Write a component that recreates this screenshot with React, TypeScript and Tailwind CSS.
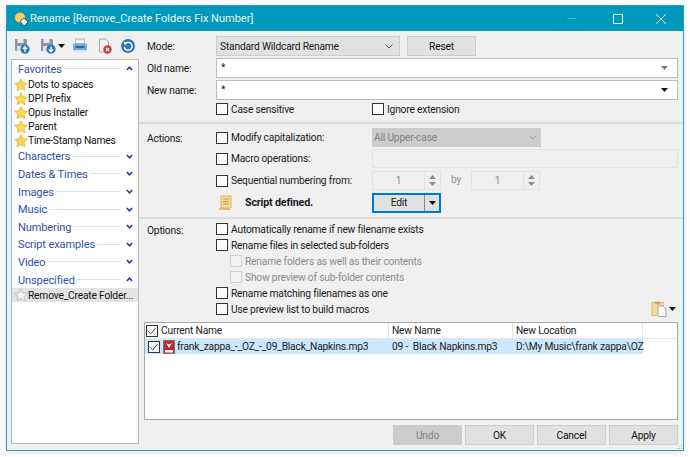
import React from "react";

const font = { fontFamily: 'Roboto, "Noto Sans", sans-serif' };

const Star = ({ grey = false }: { grey?: boolean }) => (
  <svg width="14" height="14" viewBox="0 0 14 14" className="shrink-0">
    <path
      d="M7 .8l1.900 4 4.400.5-3.300 3 .9 4.400L7 10.500l-3.900 2.200.9-4.400-3.300-3 4.400-.5z"
      fill={grey ? "#f4f4f4" : "#fbd84e"}
      stroke={grey ? "#b9b9b9" : "#d8b13a"}
      strokeWidth="0.8"
    />
  </svg>
);

const Chevron = ({ up = false }: { up?: boolean }) => (
  <svg width="7" height="5" viewBox="0 0 7 5" className="shrink-0">
    <path d={up ? "M.8 4L3.500 1.200 6.200 4" : "M.8 1l2.700 2.800L6.200 1"} fill="none" stroke="#1c3f94" strokeWidth="1.500" />
  </svg>
);

const Caret = ({ color = "#111" }: { color?: string }) => (
  <svg width="7" height="4" viewBox="0 0 7 4" className="shrink-0">
    <path d="M0 0h7L3.500 4z" fill={color} />
  </svg>
);

const Floppy = ({ up }: { up: boolean }) => (
  <svg width="16" height="16" viewBox="0 0 16 16" className="shrink-0">
    <path d="M1 1h11l1 1v11H1z" fill="#8d949c" />
    <rect x="3.500" y="1" width="6" height="4" fill="#e8eaec" />
    <rect x="3" y="8" width="7" height="5" fill="#dfe2e5" />
    <circle cx="11" cy="11.200" r="4.600" fill="#2a78b8" />
    <path
      d={up ? "M11 14v-5M8.800 11L11 8.600l2.200 2.400" : "M11 8.500v5M8.800 11.400l2.200 2.300 2.200-2.300"}
      fill="none"
      stroke="#fff"
      strokeWidth="1.300"
    />
  </svg>
);

const Box = ({ checked = false, disabled = false }: { checked?: boolean; disabled?: boolean }) => (
  <div
    className={`w-[12px] h-[12px] shrink-0 border flex items-center justify-center ${
      disabled ? "border-[#cfcfcf] bg-[#f3f3f3]" : "border-[#333] bg-[#fbfbfb]"
    }`}
  >
    {checked && (
      <svg width="10" height="10" viewBox="0 0 10 10">
        <path d="M1.200 5.200l2.600 2.600 5-6" fill="none" stroke="#444" strokeWidth="1" />
      </svg>
    )}
  </div>
);

const Check = ({ label, disabled = false }: { label: string; disabled?: boolean }) => (
  <div className="flex items-center gap-[3px] whitespace-nowrap">
    <Box disabled={disabled} />
    <span className={`pt-[2px] ${disabled ? "text-[#8c8c8c]" : ""}`}>{label}</span>
  </div>
);

const Group = ({ title, open = false }: { title: string; open?: boolean }) => (
  <div className="h-[17.6px] flex items-center pl-[6px] pr-[4px]">
    <span className="text-[#2d50a8] text-[11px] tracking-[-0.1px] pt-[1px]">{title}</span>
    <div className="flex-1 h-px bg-[#d9e3f3] mx-[2px]" />
    <div className="w-[10px] ml-[2px] flex justify-center">
      <Chevron up={open} />
    </div>
  </div>
);

const Item = ({ label, selected = false }: { label: string; selected?: boolean }) => (
  <div className={`h-[14px] flex items-center pl-[2px] ${selected ? "bg-[#e3e3e3]" : ""}`}>
    <Star grey={selected} />
    <span className="whitespace-nowrap text-[#111] pt-[1px]">{label}</span>
  </div>
);

const Spin = () => (
  <div className="w-[69px] h-[19px] border border-[#e3e3e3] bg-[#f0f0f0] flex text-[#8c8c8c]">
    <div className="flex-1 text-center leading-[17px]">1</div>
    <div className="w-[16px] border-l border-[#e3e3e3] flex flex-col items-center justify-around py-[2px]">
      <svg width="7" height="4" viewBox="0 0 7 4"><path d="M0 4h7L3.500 0z" fill="#8c8c8c" /></svg>
      <Caret color="#8c8c8c" />
    </div>
  </div>
);

const Btn = ({ label, disabled = false }: { label: string; disabled?: boolean }) => (
  <div
    className={`w-[69px] h-[20px] pt-[2px] flex items-center justify-center border ${
      disabled ? "bg-[#cccccc] border-[#cccccc] text-[#838383]" : "bg-[#e1e1e1] border-[#cdcdcd] text-[#111]"
    }`}
  >
    {label}
  </div>
);

export default function App() {
  return (
    <div className="w-[690px] h-[457px] bg-white overflow-hidden pl-[6px] pt-[5px] text-[10.25px] tracking-[-0.2px] text-[#1a1a1a] leading-none" style={font}>
      <div className="relative w-[678px] h-[446px] border border-[#2d9fc0] bg-[#f0f0f0] flex flex-col shadow-[0_1px_6px_rgba(0,0,0,0.14)]">
        {/* title bar */}
        <div className="h-[25px] shrink-0 bg-[#0099bc] flex items-center pl-[6px] text-[#e8f6fa]">
          <svg width="16" height="16" viewBox="0 0 16 16" className="shrink-0">
            <circle cx="7" cy="6.500" r="5.500" fill="#f5d25a" stroke="#5a6ea0" strokeWidth="1" />
            <path d="M7 10l4-3 4 4-4 4z" fill="#f4f4f4" stroke="#3d5a9a" strokeWidth="1" />
          </svg>
          <span className="ml-[1px] text-[11px] tracking-normal whitespace-nowrap">Rename [Remove_Create Folders Fix Number]</span>
          <div className="ml-auto w-[9px] h-px bg-[#3fb0cc] mr-[37px]" />
          <div className="w-[10px] h-[10px] border border-[#dff3f8] mr-[33px]" />
          <svg width="10" height="10" viewBox="0 0 10 10" className="mr-[17px]">
            <path d="M.3.3l9.400 9.400M9.700.3L.3 9.700" stroke="#e8f6fa" strokeWidth="1" />
          </svg>
        </div>

        <div className="flex-1 flex min-h-0">
          {/* left column */}
          <div className="w-[132px] shrink-0 flex flex-col pl-[4px] pb-[6px]">
            <div className="h-[28px] shrink-0 flex items-center pl-[3px] pt-[2px]">
              <Floppy up />
              <div className="ml-[10px]"><Floppy up={false} /></div>
              <div className="ml-[2px]"><Caret /></div>
              <svg width="16" height="16" viewBox="0 0 16 16" className="ml-[7px] shrink-0">
                <rect x="3.500" y="1" width="9" height="5" fill="#eef1f4" stroke="#a9b4c0" />
                <rect x="1" y="5.500" width="14" height="7" rx="1" fill="#7fa8cf" />
                <rect x="3.500" y="8" width="9" height="2" fill="#2f6da6" />
                <rect x="3.500" y="12" width="9" height="2.500" fill="#dfe5ea" />
              </svg>
              <svg width="16" height="16" viewBox="0 0 16 16" className="ml-[9px] shrink-0">
                <path d="M2.500 1h6l3 3v10h-9z" fill="#f4f4f4" stroke="#a8a8a8" />
                <circle cx="10.500" cy="11.500" r="4.200" fill="#d9352b" />
                <path d="M8.800 9.800l3.400 3.400M12.200 9.800l-3.400 3.400" stroke="#fff" strokeWidth="1.200" />
              </svg>
              <svg width="16" height="16" viewBox="0 0 16 16" className="ml-[7px] shrink-0">
                <circle cx="8" cy="8" r="7" fill="#2a78b8" />
                <path d="M5 5.800A4 4 0 1 1 4.200 9" fill="none" stroke="#fff" strokeWidth="1.400" />
                <path d="M3.800 3.600l.2 3.200 3-.6z" fill="#fff" />
              </svg>
            </div>
            <div className="flex-1 bg-white border border-[#b9b9b9] overflow-hidden">
              <Group title="Favorites" open />
              <Item label="Dots to spaces" />
              <Item label="DPI Prefix" />
              <Item label="Opus Installer" />
              <Item label="Parent" />
              <Item label="Time-Stamp Names" />
              <Group title="Characters" />
              <Group title="Dates & Times" />
              <Group title="Images" />
              <Group title="Music" />
              <Group title="Numbering" />
              <Group title="Script examples" />
              <Group title="Video" />
              <Group title="Unspecified" open />
              <Item label="Remove_Create Folder..." selected />
            </div>
          </div>

          {/* right column */}
          <div className="flex-1 min-w-0 flex flex-col">
            <div className="pt-[5px] pb-[6px] pl-[8px] pr-[5px] border-b-2 border-[#dcdcdc] flex flex-col gap-[2px]">
              <div className="flex items-center">
                <span className="w-[69px] pt-[2px]">Mode:</span>
                <div className="w-[184px] h-[20px] bg-[#e1e1e1] border border-[#cdcdcd] flex items-center justify-between px-[3px]">
                  <span className="pt-[2px]">Standard Wildcard Rename</span>
                  <svg width="8" height="5" viewBox="0 0 8 5" className="mr-[3px]">
                    <path d="M.5.5L4 4 7.500.5" fill="none" stroke="#555" />
                  </svg>
                </div>
                <div className="ml-[7px]"><Btn label="Reset" /></div>
              </div>
              {[["Old name:", "#777"], ["New name:", "#111"]].map(([label, c]) => (
                <div key={label} className="flex items-center">
                  <span className="w-[69px] pt-[2px]">{label}</span>
                  <div className="flex-1 h-[20px] bg-white border border-[#bdbdbd] flex items-center justify-between pl-[4px] pr-[9px]">
                    <span>*</span>
                    <Caret color={c} />
                  </div>
                </div>
              ))}
              <div className="h-[14px] flex items-center pl-[69px]">
                <div className="w-[156px]"><Check label="Case sensitive" /></div>
                <Check label="Ignore extension" />
              </div>
            </div>

            <div className="pt-[4px] pb-[5px] pl-[8px] pr-[5px] border-b-2 border-[#dcdcdc] flex">
              <span className="w-[69px] pt-[6px]">Actions:</span>
              <div className="flex-1 flex flex-col gap-[3px]">
                <div className="flex items-center h-[19px]">
                  <div className="w-[156px]"><Check label="Modify capitalization:" /></div>
                  <div className="w-[169px] h-[19px] bg-[#cccccc] text-[#838383] flex items-center justify-between px-[2px]">
                    <span className="pt-[2px]">All Upper-case</span>
                    <svg width="8" height="5" viewBox="0 0 8 5" className="mr-[2px]">
                      <path d="M.5.5L4 4 7.500.5" fill="none" stroke="#9a9a9a" />
                    </svg>
                  </div>
                </div>
                <div className="flex items-center h-[19px] -mt-[1px]">
                  <div className="w-[156px]"><Check label="Macro operations:" /></div>
                  <div className="flex-1 h-[19px] bg-[#f0f0f0] border border-[#e3e3e3]" />
                </div>
                <div className="flex items-center h-[19px]">
                  <div className="w-[156px]"><Check label="Sequential numbering from:" /></div>
                  <Spin />
                  <span className="w-[30px] text-center text-[#8c8c8c]">by</span>
                  <Spin />
                </div>
                <div className="flex items-center h-[19px]">
                  <svg width="16" height="16" viewBox="0 0 16 16" className="ml-[2px] shrink-0">
                    <path d="M3 1h10v12H3z" fill="#f6dc94" stroke="#d9b258" />
                    <path d="M1 13h11v2H1z" fill="#e3bd68" />
                    <path d="M5 4h6M5 6.500h6M5 9h6" stroke="#c49a42" />
                  </svg>
                  <span className="w-[138px] pl-[11px] pt-[2px] font-bold text-[10.75px] shrink-0 whitespace-nowrap">Script defined.</span>
                  <div className="w-[69px] h-[20px] border-2 border-[#0078d7] bg-[#e1e1e1] flex items-center">
                    <span className="flex-1 text-center pt-[2px]">Edit</span>
                    <div className="w-[15px] h-full border-l border-[#8a8a8a] flex items-center justify-center"><Caret /></div>
                  </div>
                </div>
              </div>
            </div>

            <div className="pt-[2px] pl-[8px] pr-[5px] flex">
              <span className="w-[69px] pt-[5px]">Options:</span>
              <div className="flex-1 flex flex-col">
                <div className="h-[16px] flex items-center"><Check label="Automatically rename if new filename exists" /></div>
                <div className="h-[16px] flex items-center"><Check label="Rename files in selected sub-folders" /></div>
                <div className="h-[16px] flex items-center pl-[14px]"><Check disabled label="Rename folders as well as their contents" /></div>
                <div className="h-[16px] flex items-center pl-[14px]"><Check disabled label="Show preview of sub-folder contents" /></div>
                <div className="h-[16px] flex items-center"><Check label="Rename matching filenames as one" /></div>
                <div className="h-[16px] flex items-center justify-between">
                  <Check label="Use preview list to build macros" />
                  <div className="flex items-center gap-[2px] pr-[2px]">
                    <svg width="16" height="16" viewBox="0 0 16 16">
                      <rect x="1" y="1.500" width="11" height="13" fill="#f5dc9a" stroke="#d9bb6e" />
                      <rect x="4" y="0.500" width="5" height="3" fill="#c9a557" />
                      <path d="M7 5h5l3 3v7.500H7z" fill="#fff" stroke="#aaa" />
                    </svg>
                    <Caret />
                  </div>
                </div>
              </div>
            </div>

            {/* preview list */}
            <div className="mt-[5px] mx-[5px] h-[98px] bg-white border border-[#a8a8a8]">
              <div className="h-[16px] grid grid-cols-[244px_124px_130px] border-b border-[#e5e5e5]">
                <div className="flex items-center gap-[3px] pl-[1px] border-r border-[#e5e5e5]">
                  <Box checked />
                  <span className="pt-[2px]">Current Name</span>
                </div>
                <div className="flex items-center pl-[3px] pt-[2px] border-r border-[#e5e5e5]">New Name</div>
                <div className="flex items-center pl-[3px] pt-[2px] border-r border-[#e5e5e5]">New Location</div>
              </div>
              <div className="h-[15px] w-[498px] grid grid-cols-[244px_124px_130px] bg-[#cce8ff]">
                <div className="flex items-center pl-[3px]">
                  <Box checked />
                  <svg width="12" height="14" viewBox="0 0 12 14" className="ml-[3px] shrink-0">
                    <rect x="0.500" y="0.500" width="11" height="13" fill="#c9262c" stroke="#777" />
                    <path d="M3 3l3 5 3-5-3 1.500z" fill="#fff" />
                    <rect x="2" y="10" width="8" height="2.500" fill="#f2f2f2" />
                  </svg>
                  <span className="ml-[2px] pt-[2px] whitespace-nowrap">frank_zappa_-_OZ_-_09_Black_Napkins.mp3</span>
                </div>
                <div className="flex items-center pl-[3px] pt-[2px] whitespace-pre">09 -  Black Napkins.mp3</div>
                <div className="flex items-center pl-[3px] pt-[2px] whitespace-nowrap">D:\My Music\frank zappa\OZ</div>
              </div>
            </div>

            {/* bottom buttons */}
            <div className="mt-[5px] pr-[5px] flex justify-end gap-[3px]">
              <Btn label="Undo" disabled />
              <Btn label="OK" />
              <Btn label="Cancel" />
              <Btn label="Apply" />
            </div>
          </div>
        </div>

        {/* resize grip */}
        <svg width="7" height="7" viewBox="0 0 7 7" className="absolute right-0 bottom-0">
          <path d="M5 1h1v1H5zM3 3h1v1H3zM5 3h1v1H5zM1 5h1v1H1zM3 5h1v1H3zM5 5h1v1H5z" fill="#b5b5b5" />
        </svg>
      </div>
    </div>
  );
}
